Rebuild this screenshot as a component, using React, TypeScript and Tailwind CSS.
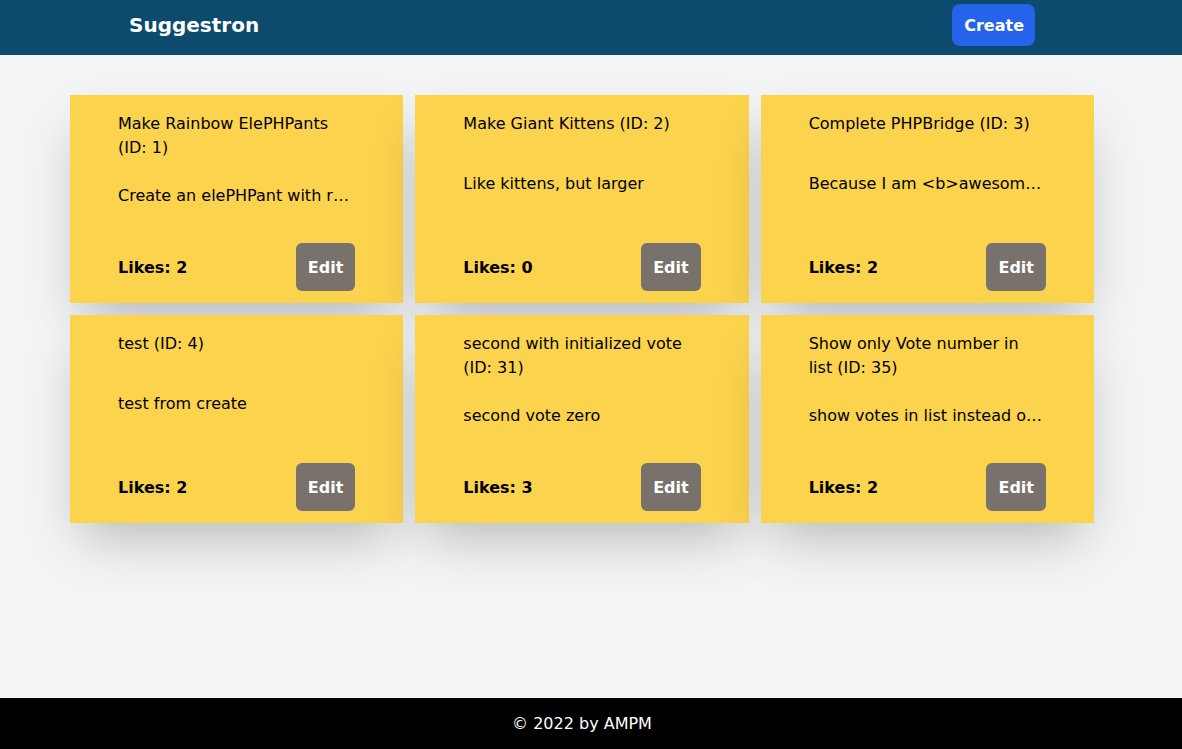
const suggestions = [
  { id: 1, title: 'Make Rainbow ElePHPants', description: 'Create an elePHPant with rainbow colors', likes: 2 },
  { id: 2, title: 'Make Giant Kittens', description: 'Like kittens, but larger', likes: 0 },
  { id: 3, title: 'Complete PHPBridge', description: 'Because I am <b>awesome</b>', likes: 2 },
  { id: 4, title: 'test', description: 'test from create', likes: 2 },
  { id: 31, title: 'second with initialized vote', description: 'second vote zero', likes: 3 },
  { id: 35, title: 'Show only Vote number in list', description: 'show votes in list instead of names', likes: 2 },
]

export default function App() {
  return (
    <div className="min-h-screen flex flex-col bg-[#f3f4f6] text-black font-['DejaVu_Sans',sans-serif]">
      <header className="bg-[#0c4a6e] h-[55px]">
        <div className="w-[1164px] h-full flex items-start justify-between px-[129px]">
          <h1 className="pt-[11px] text-xl leading-7 font-bold text-white">Suggestron</h1>
          <button className="mt-1 rounded-lg bg-[#2563eb] pl-3 pr-[11px] pt-[10px] pb-[8px] leading-6 font-bold text-white">
            Create
          </button>
        </div>
      </header>

      <main className="flex-1 w-[1164px]">
        <div className="mx-auto mt-10 grid max-w-5xl grid-cols-3 gap-3">
          {suggestions.map((s) => (
            <div
              key={s.id}
              className="flex h-[208px] flex-col justify-between bg-[#fcd34d] px-12 pt-4 pb-3 shadow-2xl"
            >
              <p className="translate-y-px leading-6">
                {s.title} (ID: {s.id})
              </p>
              <p className="h-9 translate-y-px truncate leading-6">{s.description}</p>
              <div className="flex items-center justify-between">
                <span className="translate-y-px font-bold">Likes: {s.likes}</span>
                <button className="rounded-md bg-[#78716c] px-3 pt-[13px] pb-[11px] leading-6 font-bold text-white">
                  Edit
                </button>
              </div>
            </div>
          ))}
        </div>
      </main>

      <footer className="h-[51px] bg-black">
        <div className="w-[1164px] h-full flex items-center justify-center text-white">
          © 2022 by AMPM
        </div>
      </footer>
    </div>
  )
}
